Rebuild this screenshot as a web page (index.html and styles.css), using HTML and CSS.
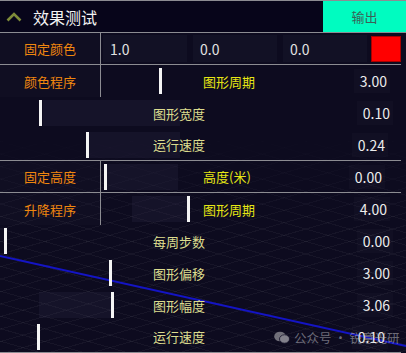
FILE: index.html
```html
<!DOCTYPE html>
<html lang="zh">
<head>
<meta charset="utf-8">
<link rel="stylesheet" href="styles.css">
</head>
<body>
<div class="panel">
  <div class="backdrop">
    <div class="mesh"></div>
    <svg class="trace" width="406" height="353" viewBox="0 0 406 353"><line x1="0" y1="256" x2="406" y2="346" stroke="#1414c4" stroke-width="2"/></svg>
  </div>

  <header class="head">
    <svg class="chev" width="16" height="10" viewBox="0 0 16 10"><polyline points="1.5,8.5 8,2 14.5,8.5" fill="none" stroke="#7f8c3a" stroke-width="2.6"/></svg>
    <span class="title">效果测试</span>
    <button class="out">输出</button>
  </header>

  <div class="row line">
    <div class="cat">固定颜色</div>
    <div class="inputs">
      <span class="num">1.0</span>
      <span class="num">0.0</span>
      <span class="num">0.0</span>
      <span class="swatch"></span>
    </div>
  </div>

  <div class="row">
    <div class="cat">颜色程序</div>
    <div class="slider part">
      <span class="knob" style="left:58px"></span>
      <span class="lbl hot">图形周期</span>
      <span class="val">3.00</span>
    </div>
  </div>

  <div class="row">
    <div class="slider full">
      <span class="shade" style="left:43px;width:137px"></span>
      <span class="knob" style="left:39px"></span>
      <span class="lbl">图形宽度</span>
      <span class="val">0.10</span>
    </div>
  </div>

  <div class="row line">
    <div class="slider full">
      <span class="shade" style="left:89px;width:91px"></span>
      <span class="knob" style="left:86px"></span>
      <span class="lbl">运行速度</span>
      <span class="val">0.24</span>
    </div>
  </div>

  <div class="row line">
    <div class="cat">固定高度</div>
    <div class="slider part">
      <span class="shade" style="left:6px;width:71px"></span>
      <span class="knob" style="left:3px"></span>
      <span class="lbl hot">高度(米)</span>
      <span class="val">0.00</span>
    </div>
  </div>

  <div class="row">
    <div class="cat">升降程序</div>
    <div class="slider part">
      <span class="shade" style="left:31px;width:55px"></span>
      <span class="knob" style="left:86px"></span>
      <span class="lbl hot">图形周期</span>
      <span class="val">4.00</span>
    </div>
  </div>

  <div class="row">
    <div class="slider full">
      <span class="knob" style="left:4px"></span>
      <span class="lbl">每周步数</span>
      <span class="val">0.00</span>
    </div>
  </div>

  <div class="row">
    <div class="slider full">
      <span class="knob" style="left:109px"></span>
      <span class="lbl">图形偏移</span>
      <span class="val">3.00</span>
    </div>
  </div>

  <div class="row">
    <div class="slider full">
      <span class="shade" style="left:39px;width:72px"></span>
      <span class="knob" style="left:111px"></span>
      <span class="lbl">图形幅度</span>
      <span class="val">3.06</span>
    </div>
  </div>

  <div class="row line">
    <div class="slider full">
      <span class="knob" style="left:37px"></span>
      <span class="lbl">运行速度</span>
      <span class="val">0.10</span>
    </div>
  </div>

  <div class="mark">
    <svg width="16" height="13" viewBox="0 0 16 13"><ellipse cx="6" cy="5.5" rx="5.8" ry="4.8" fill="#9a9aa0"/><ellipse cx="10.5" cy="8" rx="5" ry="4.2" fill="#b4b4ba" stroke="#14122a" stroke-width="0.8"/></svg>
    <span>公众号 · 锐意光研</span>
  </div>
</div>
</body>
</html>
```

FILE: styles.css
```css
* { box-sizing: border-box; }
html, body {
  margin: 0;
  padding: 0;
  background: #0d0b1f;
}
body {
  font-family: "Noto Sans CJK SC", "Noto Sans", sans-serif;
  width: 406px;
  height: 353px;
  overflow: hidden;
}
.panel {
  position: relative;
  width: 406px;
  height: 353px;
  background: #0d0b1f;
  display: flex;
  flex-direction: column;
}
.backdrop {
  position: absolute;
  inset: 0;
  z-index: 0;
  pointer-events: none;
}
.mesh {
  position: absolute;
  left: 0;
  right: 0;
  top: 130px;
  bottom: 0;
  background:
    repeating-linear-gradient(16deg, rgba(255,255,255,0) 0 11px, rgba(255,255,255,0.045) 11px 12px),
    repeating-linear-gradient(164deg, rgba(255,255,255,0) 0 11px, rgba(255,255,255,0.045) 11px 12px);
  -webkit-mask-image: linear-gradient(to bottom, transparent 0%, #000 45%, #000 100%);
  mask-image: linear-gradient(to bottom, transparent 0%, #000 45%, #000 100%);
}
.trace {
  position: absolute;
  left: 0;
  top: 0;
}
.head {
  position: relative;
  z-index: 1;
  height: 33px;
  flex: none;
  display: flex;
  align-items: center;
  background: #07051a;
  border-top: 1px solid #8c8c92;
  border-bottom: 1px solid #8c8c92;
}
.chev {
  margin-left: 6px;
  margin-top: 1px;
}
.title {
  margin-left: 11px;
  color: #f2f2f2;
  font-size: 16px;
  line-height: 1;
}
.out {
  margin-left: auto;
  width: 83px;
  height: 31px;
  border: 0;
  padding: 0;
  background: #00fcc0;
  color: #3c5f56;
  font-family: "Noto Sans CJK SC", sans-serif;
  font-size: 13px;
}
.row {
  position: relative;
  z-index: 1;
  height: 32px;
  flex: none;
  display: flex;
  align-items: stretch;
}
.row.line {
  border-bottom: 1px solid #8c8c92;
  margin-right: 5px;
}
.cat {
  width: 101px;
  flex: none;
  border-right: 1px solid #8c8c92;
  display: flex;
  align-items: center;
  justify-content: center;
  color: #f0870f;
  font-size: 13px;
  background: rgba(255,255,255,0.015);
}
.inputs {
  flex: 1;
  display: flex;
  align-items: center;
  padding-left: 2px;
  gap: 6px;
}
.num {
  width: 84px;
  height: 27px;
  background: #121125;
  color: #e2e2e2;
  font-size: 14px;
  display: flex;
  align-items: center;
  padding-left: 7px;
}
.swatch {
  width: 30px;
  height: 26px;
  margin-left: -2px;
  background: #ff0000;
  border: 1px solid #a80000;
}
.slider {
  position: relative;
  flex: 1;
  display: flex;
  align-items: center;
}
.slider.part { padding-right: 19px; }
.slider.part .lbl { padding-left: 102px; }
.slider.full { padding-right: 16px; }
.slider.full .lbl { padding-left: 153px; }
.knob {
  position: absolute;
  top: 3px;
  width: 3px;
  height: 26px;
  background: #f4f4f4;
}
.shade {
  position: absolute;
  top: 3px;
  height: 26px;
  background: rgba(60,58,90,0.18);
}
.lbl {
  position: relative;
  color: #dcdc8e;
  font-size: 13px;
}
.lbl.hot { color: #e6e614; }
.val {
  position: relative;
  margin-left: auto;
  color: #ececec;
  font-size: 14px;
  padding: 2px 3px 2px 6px;
  margin-right: -3px;
  background: rgba(255,255,255,0.02);
}
.mark {
  position: absolute;
  z-index: 2;
  left: 274px;
  top: 328px;
  display: flex;
  align-items: center;
  gap: 4px;
  color: rgba(190,190,196,0.55);
  font-size: 12.5px;
  pointer-events: none;
}
.mark svg { opacity: 0.7; }
```
